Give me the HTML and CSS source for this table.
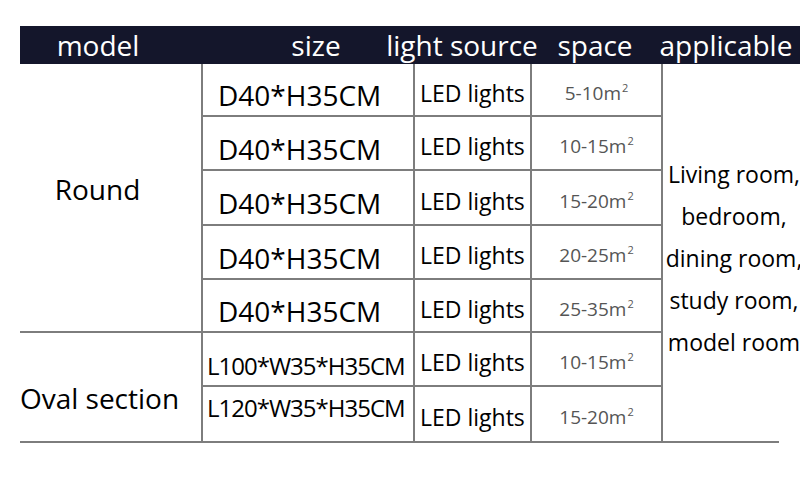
FILE: index.html
```html
<!DOCTYPE html>
<html>
<head>
<meta charset="utf-8">
<link rel="stylesheet" href="styles.css">
</head>
<body>
<div class="sheet">
  <div class="head">
    <span class="h h-model">model</span>
    <span class="h h-size">size</span>
    <span class="h h-light">light source</span>
    <span class="h h-space">space</span>
    <span class="h h-app">applicable</span>
  </div>
  <div class="grid">
    <div class="cell model round">Round</div>
    <div class="cell model oval">Oval section</div>
    <div class="cell app">Living room,<br>bedroom,<br>dining room,<br>study room,<br>model room</div>

    <div class="cell size">D40*H35CM</div>
    <div class="cell light">LED lights</div>
    <div class="cell space"><span>5-10m<sup>2</sup></span></div>

    <div class="cell size">D40*H35CM</div>
    <div class="cell light">LED lights</div>
    <div class="cell space"><span>10-15m<sup>2</sup></span></div>

    <div class="cell size">D40*H35CM</div>
    <div class="cell light">LED lights</div>
    <div class="cell space"><span>15-20m<sup>2</sup></span></div>

    <div class="cell size">D40*H35CM</div>
    <div class="cell light">LED lights</div>
    <div class="cell space"><span>20-25m<sup>2</sup></span></div>

    <div class="cell size">D40*H35CM</div>
    <div class="cell light">LED lights</div>
    <div class="cell space"><span>25-35m<sup>2</sup></span></div>

    <div class="cell size long up">L100*W35*H35CM</div>
    <div class="cell light">LED lights</div>
    <div class="cell space"><span>10-15m<sup>2</sup></span></div>

    <div class="cell size long down last">L120*W35*H35CM</div>
    <div class="cell light last">LED lights</div>
    <div class="cell space last"><span>15-20m<sup>2</sup></span></div>
  </div>
  <div class="rule"></div>
</div>
</body>
</html>
```

FILE: styles.css
```css
html, body {
  margin: 0;
  padding: 0;
  overflow: hidden;
  background: #ffffff;
}

body {
  font-family: "Open Sans", "Noto Sans", sans-serif;
  color: #000;
  width: 800px;
  height: 486px;
}

.sheet {
  padding: 26px 0 0 20px;
}

.head {
  width: 780px;
  height: 38px;
  background: #14162b;
  color: #fff;
  display: flex;
  font-size: 28px;
  line-height: 38px;
  white-space: nowrap;
}

.h { text-align: center; flex: none; }
.h-model { margin-left: 18px; width: 120px; }
.h-size { margin-left: 118px; width: 80px; }
.h-light { margin-left: 21px; width: 170px; }
.h-space { margin-left: 3px; width: 90px; }
.h-app { margin-left: 11px; width: 150px; }

.grid {
  display: grid;
  grid-template-columns: 183px 212px 117px 131px 144px;
  grid-template-rows: 53px 54px 55px 54px 53px 54px 54px;
  width: 787px;
}

.cell {
  box-sizing: border-box;
  display: flex;
  align-items: center;
  border-right: 2px solid #7d7d7d;
  border-bottom: 2px solid #7d7d7d;
  white-space: nowrap;
}

.cell.last { border-bottom: none; }

.model {
  grid-column: 1;
  font-size: 28px;
  justify-content: center;
  padding-right: 26px;
}

.round {
  grid-row: 1 / 6;
  padding-bottom: 18px;
}

.oval {
  grid-row: 6 / 8;
  border-bottom: none;
  padding-top: 22px;
  padding-right: 22px;
}

.app {
  grid-column: 5;
  grid-row: 1 / 8;
  border: none;
  justify-content: center;
  text-align: center;
  font-size: 23px;
  line-height: 42px;
  padding-top: 11px;
  padding-right: 2px;
  white-space: nowrap;
}

.size {
  font-size: 28px;
  padding-left: 15px;
  padding-top: 11px;
}

.size.long {
  font-size: 24px;
  letter-spacing: -1px;
  padding-left: 4px;
}

.size.up { padding-top: 13px; }
.size.down { padding-top: 0; padding-bottom: 13px; }

.light {
  font-size: 23px;
  padding-left: 5px;
  padding-top: 6px;
}

.space {
  font-size: 19px;
  color: #555;
  justify-content: center;
  padding-top: 6px;
}

.space sup {
  font-size: 11px;
  line-height: 0;
  vertical-align: 8px;
  margin-left: 1px;
}

.rule {
  width: 759px;
  height: 2px;
  background: #7d7d7d;
}
```
